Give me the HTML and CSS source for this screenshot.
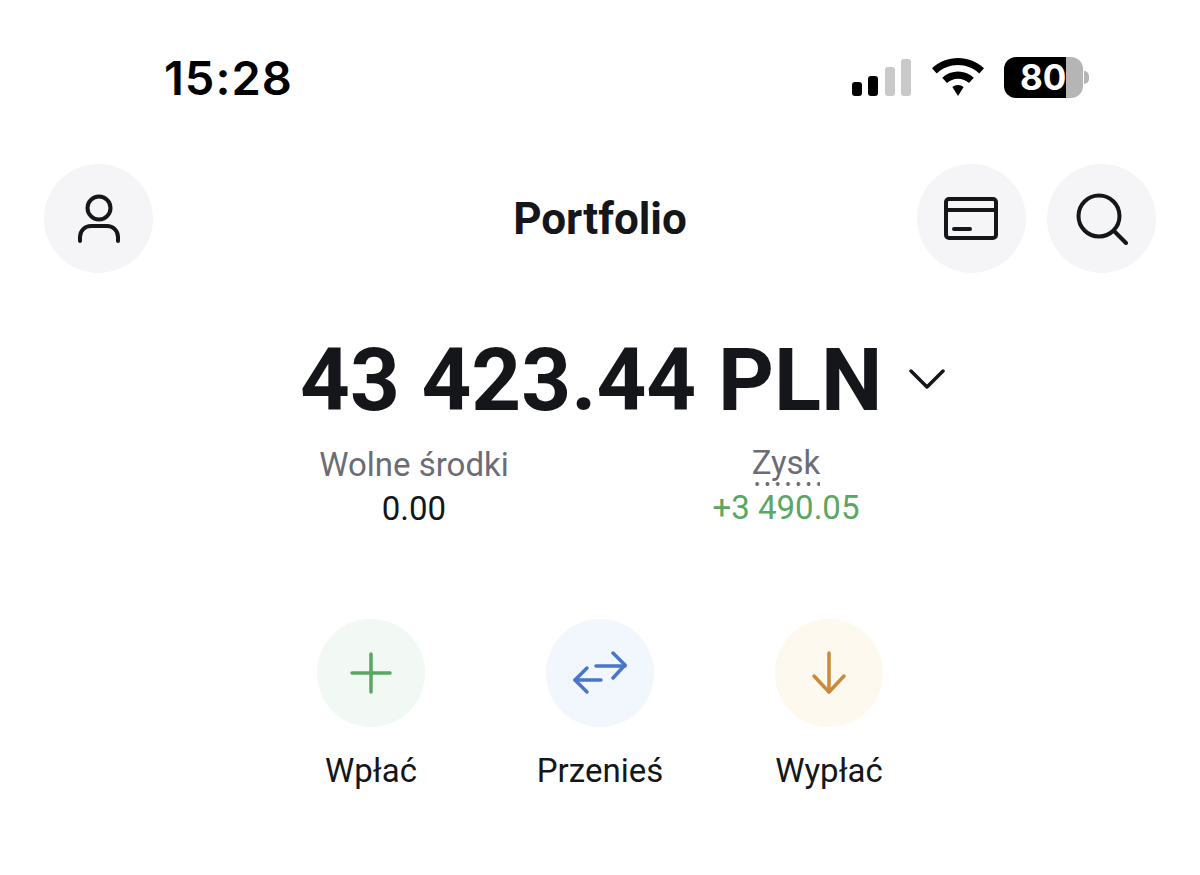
FILE: index.html
```html
<!DOCTYPE html>
<html lang="en">
<head>
    <meta charset="UTF-8">
    <meta name="viewport" content="width=device-width, initial-scale=1.0">
    <title>Portfolio</title>
    <link rel="stylesheet" href="styles.css">
</head>
<body>
    <div class="status-bar">
        <span class="time">15:28</span>
        <div class="status-icons">
            <div class="signal">
                <span class="bar bar-1"></span>
                <span class="bar bar-2"></span>
                <span class="bar bar-3 off"></span>
                <span class="bar bar-4 off"></span>
            </div>
            <svg class="wifi" width="52" height="38" viewBox="0 0 52 38">
                <path d="M26 0C16.500 0 7.500 3.600 0 10.200L4.700 15.400C10.700 10 18.100 7 26 7C33.900 7 41.300 10 47.300 15.400L52 10.200C44.500 3.600 35.500 0 26 0Z"/>
                <path d="M26 13.500C20.200 13.500 14.700 15.700 10.200 19.700L15 25C18 22.300 21.800 20.700 26 20.700C30.200 20.700 34 22.300 37 25L41.800 19.700C37.300 15.700 31.800 13.500 26 13.500Z"/>
                <path d="M26 27C23.900 27 21.900 27.800 20.400 29.100L26 38L31.600 29.100C30.100 27.800 28.100 27 26 27Z"/>
            </svg>
            <div class="battery">
                <div class="battery-body">80</div>
                <span class="battery-nub"></span>
            </div>
        </div>
    </div>

    <header class="top-bar">
        <button class="round-btn" type="button">
            <svg width="48" height="50" viewBox="0 0 48 50" fill="none" stroke="#14161a" stroke-width="4" stroke-linecap="round">
                <circle cx="24" cy="14" r="11.500"/>
                <path d="M5 47V43C5 36.500 10 32 16 32H32C38 32 43 36.500 43 43V47"/>
            </svg>
        </button>
        <h1>Portfolio</h1>
        <div class="top-actions">
            <button class="round-btn" type="button">
                <svg class="card-icon" width="54" height="44" viewBox="0 0 54 44" fill="none" stroke="#14161a" stroke-width="4" stroke-linecap="round" stroke-linejoin="round">
                    <rect x="2" y="2" width="50" height="39" rx="3"/>
                    <path d="M2 13H52"/>
                    <path d="M10 32H26"/>
                </svg>
            </button>
            <button class="round-btn" type="button">
                <svg width="52" height="52" viewBox="0 0 52 52" fill="none" stroke="#14161a" stroke-width="4" stroke-linecap="round">
                    <circle cx="23" cy="23" r="20.500"/>
                    <path d="M38 38L50 50"/>
                </svg>
            </button>
        </div>
    </header>

    <div class="balance">
        <span class="amount">43 423.44 PLN</span>
        <svg class="chevron" width="36" height="20" viewBox="0 0 36 20" fill="none" stroke="#14161a" stroke-width="3.500" stroke-linecap="round" stroke-linejoin="round">
            <path d="M2 2L18 18L34 2"/>
        </svg>
    </div>

    <div class="stats">
        <div class="stat">
            <span class="stat-label">Wolne środki</span>
            <span class="stat-value">0.00</span>
        </div>
        <div class="stat">
            <span class="stat-label dotted">Zysk</span>
            <span class="stat-value green">+3 490.05</span>
        </div>
    </div>

    <div class="actions">
        <div class="action">
            <div class="action-icon bg-green">
                <svg width="42" height="42" viewBox="0 0 42 42" fill="none" stroke="#5aa662" stroke-width="3.500" stroke-linecap="round">
                    <path d="M21 2V40"/>
                    <path d="M2 21H40"/>
                </svg>
            </div>
            <span>Wpłać</span>
        </div>
        <div class="action">
            <div class="action-icon bg-blue">
                <svg width="56" height="44" viewBox="0 0 56 44" fill="none" stroke="#4a76c9" stroke-width="3.500" stroke-linecap="round" stroke-linejoin="round">
                    <path d="M24 15H53"/>
                    <path d="M41 2L53 14L41 27"/>
                    <path d="M3 29H29"/>
                    <path d="M15 17L3 29L15 41"/>
                </svg>
            </div>
            <span>Przenieś</span>
        </div>
        <div class="action">
            <div class="action-icon bg-orange">
                <svg width="36" height="44" viewBox="0 0 36 44" fill="none" stroke="#c98a3c" stroke-width="3.500" stroke-linecap="round" stroke-linejoin="round">
                    <path d="M18 2V41"/>
                    <path d="M3 25L18 41L33 25"/>
                </svg>
            </div>
            <span>Wypłać</span>
        </div>
    </div>
</body>
</html>
```

FILE: styles.css
```css
body {
    font-family: Roboto, Arial, sans-serif;
    background-color: #ffffff;
    color: #14161a;
    margin: 0;
    padding: 0;
    height: 875px;
    overflow: hidden;
}

/* status bar */
.status-bar {
    display: flex;
    justify-content: space-between;
    align-items: center;
    height: 56px;
    padding: 49px 111px 0 164px;
}

.time {
    font-family: Inter, sans-serif;
    font-size: 47px;
    font-weight: 600;
    color: #000000;
    letter-spacing: 1px;
}

.status-icons {
    display: flex;
    align-items: center;
}

.signal {
    display: flex;
    align-items: flex-end;
    gap: 6.500px;
    height: 37px;
    margin-right: 21px;
}

.bar {
    width: 10px;
    border-radius: 3px;
    background-color: #000000;
}

.bar.off {
    background-color: #c9c9c9;
}

.bar-1 { height: 14px; }
.bar-2 { height: 20px; }
.bar-3 { height: 29px; }
.bar-4 { height: 37px; }

.wifi {
    fill: #000000;
    margin-right: 20px;
}

.battery {
    display: flex;
    align-items: center;
}

.battery-body {
    width: 79px;
    height: 41px;
    border-radius: 12px;
    background: linear-gradient(to right, #000000 62px, #b5b5b5 62px);
    color: #ffffff;
    font-family: Inter, sans-serif;
    font-size: 35px;
    font-weight: 700;
    line-height: 41px;
    padding-left: 16px;
    box-sizing: border-box;
}

.battery-nub {
    width: 5px;
    height: 13px;
    margin-left: 1px;
    border-radius: 0 5px 5px 0;
    background-color: #b5b5b5;
}

/* header */
.top-bar {
    display: flex;
    justify-content: space-between;
    align-items: center;
    position: relative;
    padding: 59px 44px 0;
}

.top-bar h1 {
    position: absolute;
    left: 0;
    right: 0;
    bottom: 30px;
    margin: 0;
    text-align: center;
    font-size: 44px;
    font-weight: 700;
    line-height: 48px;
}

.top-actions {
    display: flex;
    gap: 21px;
}

.round-btn {
    display: flex;
    justify-content: center;
    align-items: center;
    width: 109px;
    height: 109px;
    padding: 0;
    border: none;
    border-radius: 50%;
    background-color: #f5f5f7;
}

.card-icon {
    margin-right: 2px;
}

/* balance */
.balance {
    display: flex;
    align-items: center;
    margin-top: 58px;
    padding-left: 300px;
}

.amount {
    font-size: 87px;
    font-weight: 700;
    line-height: 98px;
}

.chevron {
    margin-left: 27px;
    margin-top: -3px;
}

/* stats */
.stats {
    display: flex;
    justify-content: center;
    margin-top: 14px;
}

.stat {
    display: flex;
    flex-direction: column;
    align-items: center;
    width: 372px;
    font-size: 33px;
    line-height: 44px;
}

.stat-label {
    color: #6c6c76;
}

.stat-label.dotted {
    line-height: 40px;
    height: 43px;
    padding-bottom: 3px;
    background: radial-gradient(circle, #6c6c76 1.700px, transparent 2.100px) left bottom / 10.300px 4px repeat-x;
    box-sizing: border-box;
}

.stat-value.green {
    color: #5aa662;
}

/* actions */
.actions {
    display: flex;
    justify-content: center;
    margin-top: 88px;
}

.action {
    display: flex;
    flex-direction: column;
    align-items: center;
    width: 229px;
    font-size: 33px;
    line-height: 44px;
}

.action-icon {
    display: flex;
    justify-content: center;
    align-items: center;
    width: 108px;
    height: 108px;
    margin-bottom: 22px;
    border-radius: 50%;
}

.bg-green { background-color: #f2f8f3; }
.bg-blue { background-color: #f2f6fd; }
.bg-orange { background-color: #fef9ee; }
```
